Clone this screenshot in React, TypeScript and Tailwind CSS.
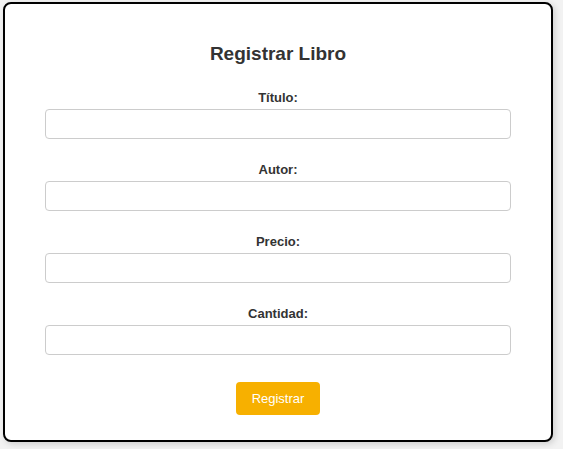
export default function App() {
  const fields = ["Título:", "Autor:", "Precio:", "Cantidad:"];
  return (
    <div
      className="w-[563px] h-[449px] bg-[#f2f2f2] pt-[2px] pl-[3px] overflow-hidden"
      style={{ fontFamily: '"Liberation Sans", Arial, sans-serif' }}
    >
      <div className="w-[550px] h-[440px] bg-white border-2 border-black rounded-[8px] shadow-[2px_2px_6px_rgba(0,0,0,0.15)] px-[40px] pt-[39px] flex flex-col">
        <h2 className="text-[19px] leading-[22px] font-bold text-[#333] text-center">
          Registrar Libro
        </h2>
        <div className="mt-[25px] flex flex-col">
          {fields.map((f) => (
            <div key={f} className="flex flex-col mb-[23px]">
              <label className="text-[13px] leading-[15px] font-bold text-[#333] text-center">
                {f}
              </label>
              <input
                type="text"
                className="mt-[4px] h-[30px] w-full border border-[#cccccc] rounded-[4px] bg-white outline-none px-2 text-[13px]"
              />
            </div>
          ))}
        </div>
        <div className="flex justify-center mt-[4px]">
          <button className="w-[84px] h-[33px] bg-[#f7b000] text-white text-[13px] rounded-[4px]">
            Registrar
          </button>
        </div>
      </div>
    </div>
  );
}
